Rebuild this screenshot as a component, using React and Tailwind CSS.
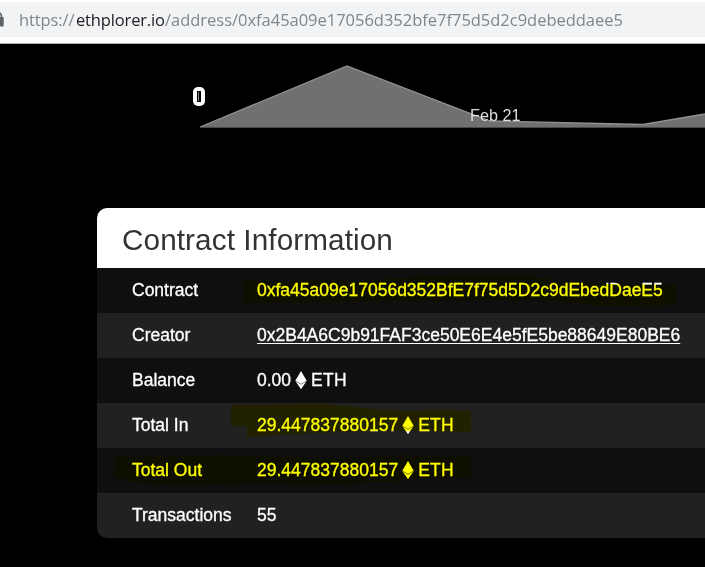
function EthIcon() {
  return (
    <svg className="mx-1 h-[18px] w-[12px] shrink-0 -translate-y-px" viewBox="0 0 12 18" fill="#fff">
      <path d="M6 0 11.7 9.8 6 13 .3 9.8Z" />
      <path d="M.5 10.3 6 13.4 11.5 10.3 6 18.2Z" />
    </svg>
  );
}

function Amount({ value }) {
  return (
    <span className="flex items-center">
      <span>{value}</span>
      <EthIcon />
      <span className="tracking-[0.3px]">ETH</span>
    </span>
  );
}

const rows = [
  ["Contract", <span>0xfa45a09e17056d352BfE7f75d5D2c9dEbedDaeE5</span>],
  ["Creator", <a className="underline decoration-1 underline-offset-2">0x2B4A6C9b91FAF3ce50E6E4e5fE5be88649E80BE6</a>],
  ["Balance", <Amount value="0.00" />],
  ["Total In", <Amount value="29.447837880157" />],
  ["Total Out", <Amount value="29.447837880157" />],
  ["Transactions", "55"],
];

function AddressBar() {
  return (
    <header className="h-[44px] border-b border-[#a9adad] bg-white pt-[2px]">
      <div className="flex h-[35px] items-center bg-[#f1f3f4]">
        <svg className="h-[35px] w-[19px] shrink-0" viewBox="0 0 19 35">
          <path d="M-5 15V14a3.2 3.2 0 0 1 6.4 0v2" fill="none" stroke="#5f6368" strokeWidth="1.6" />
          <rect x="-8" y="15" width="11.7" height="9.5" rx="1" fill="#5f6368" />
        </svg>
        <div className="whitespace-nowrap font-['Open_Sans',sans-serif] text-[16.5px] leading-[35px] text-[#80868b]">
          <span className="inline-block w-[57px] tracking-[-0.1px]">https://</span>
          <span className="inline-block w-[89px] tracking-[-0.15px] text-[#202124]">ethplorer.io</span>
          <span className="tracking-[-0.02px]">/address/0xfa45a09e17056d352bfe7f75d5d2c9debeddaee5</span>
        </div>
      </div>
    </header>
  );
}

function Chart() {
  return (
    <svg className="block h-[164px] w-[705px]" viewBox="0 44 705 164">
      <path d="M200 127 347 66 490 121 643 124.5 705 114V127Z" fill="#707070" />
      <path d="M200 127 347 66 490 121 643 124.5 705 114" fill="none" stroke="#929292" strokeWidth="1.3" />
      <path d="M200 127.5H705" stroke="#484848" />
      <rect x="193" y="87" width="12" height="19" rx="5" fill="#fff" />
      <rect x="197" y="91" width="4" height="11" fill="#000" />
      <path d="M198.5 92V101" stroke="#888" strokeWidth="1" />
      <text x="470" y="121" fill="#ddd" fontSize="16.2" fontFamily="'Liberation Sans', Arial, sans-serif">Feb 21</text>
    </svg>
  );
}

function Highlighter() {
  return (
    <svg className="pointer-events-none absolute left-0 top-0 h-[567px] w-[705px] mix-blend-multiply" viewBox="0 0 705 567" fill="#ff0">
      <path d="M244 281 310 280 360 281 425 276 520 275 560 280 610 284 676 285V305L600 306 550 301 500 300 340 302 244 303Z" />
      <path d="M231 405 325 404 375 409 410 411 440 409 471 411V432L390 431 310 433 247 437V426H231Z" />
      <path d="M115 457 220 455 340 458 400 455 471 456V477L420 480 340 484 260 483 180 485 126 482V478H115Z" />
    </svg>
  );
}

export default function App() {
  return (
    <main className="relative h-[567px] w-[705px] overflow-hidden bg-black font-['Liberation_Sans',Arial,sans-serif]">
      <AddressBar />
      <Chart />
      <section className="ml-[97px] overflow-hidden rounded-l-[10px]">
        <h1 className="h-[60px] bg-white pl-[25px] pt-[2px] text-[29.7px] leading-[60px] tracking-[0.1px] text-[#333]">Contract Information</h1>
        <div>
          {rows.map(([label, value]) => (
            <div
              key={label}
              className="flex h-[45px] items-center whitespace-nowrap bg-[#0f0f0f] pl-[35px] text-[17.5px] leading-[45px] text-white even:bg-[#212121] [-webkit-text-stroke:0.3px]"
            >
              <span className="w-[125px] shrink-0">{label}</span>
              {value}
            </div>
          ))}
        </div>
      </section>
      <Highlighter />
    </main>
  );
}
